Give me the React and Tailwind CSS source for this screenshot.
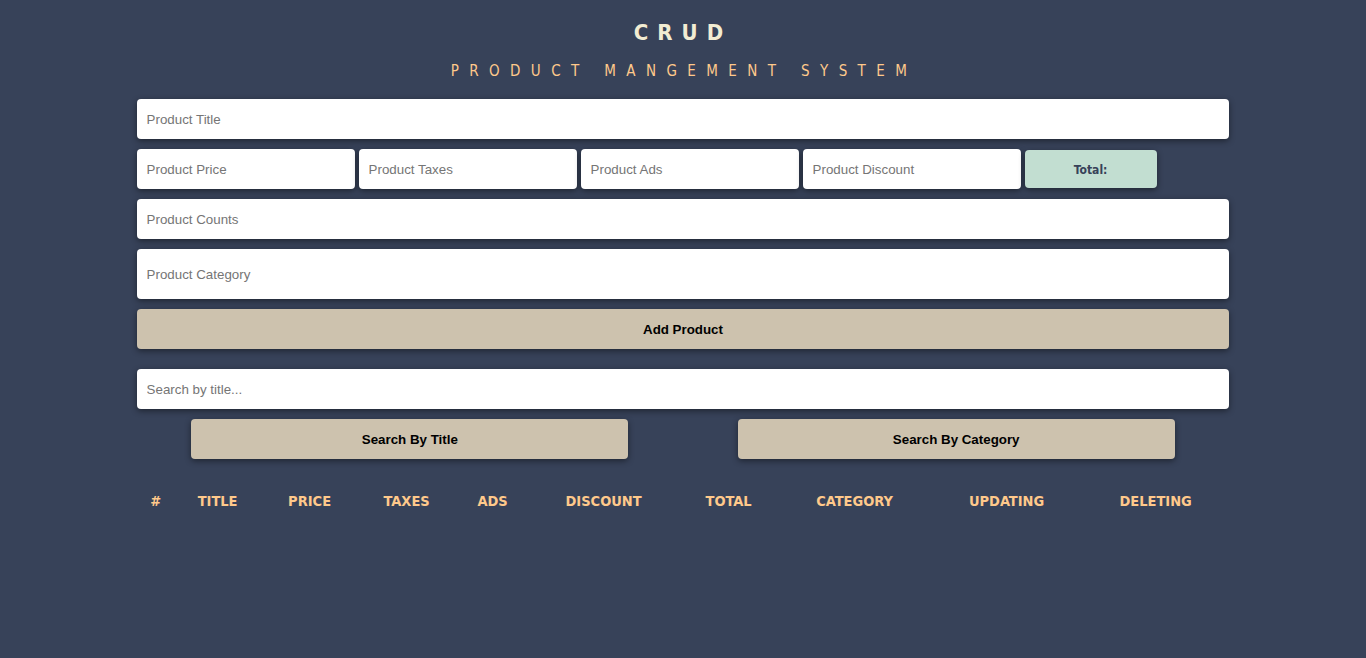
const Field = ({ placeholder, className = "" }) => (
  <input
    type="text"
    placeholder={placeholder}
    className={`w-full h-10 rounded bg-white px-[10px] pt-[1px] text-[13.33px] text-[#333] placeholder:text-[#757575] outline-none shadow-[0_2px_6px_rgba(0,0,0,0.45)] ${className}`}
    style={{ fontFamily: "'Liberation Sans', Arial, sans-serif" }}
  />
);

const Button = ({ children, className = "" }) => (
  <button
    className={`h-10 rounded bg-[#cdc2ae] pt-[1px] text-[13.33px] font-bold text-black shadow-[0_2px_6px_rgba(0,0,0,0.45)] ${className}`}
    style={{ fontFamily: "'Liberation Sans', Arial, sans-serif" }}
  >
    {children}
  </button>
);

const columns = [
  ["#", "w-[38px]"],
  ["TITLE", "w-[86px]"],
  ["PRICE", "w-[98px]"],
  ["TAXES", "w-[96px]"],
  ["ADS", "w-[76px]"],
  ["DISCOUNT", "w-[146px]"],
  ["TOTAL", "w-[104px]"],
  ["CATEGORY", "w-[148px]"],
  ["UPDATING", "w-[156px]"],
  ["DELETING", "w-[142px]"],
];

export default function App() {
  return (
    <div className="min-h-[658px] w-full bg-[#374259] font-['DejaVu_Sans_Condensed',sans-serif]">
      <div className="mx-auto w-[80%] pt-[19px]">
        <div className="text-center">
          <h1 className="h-[28px] text-[22px] leading-[28px] font-bold tracking-[9px] text-[#f2ecd2]">
            CRUD
          </h1>
          <p className="mt-[12px] h-[24px] pl-[2px] text-[15px] leading-[24px] tracking-[10.4px] text-[#ffc98b]">
            PRODUCT MANGEMENT SYSTEM
          </p>
        </div>

        <div className="mt-[16px] flex flex-col gap-[10px]">
          <Field placeholder="Product Title" />
          <div className="flex items-center gap-1">
            <Field placeholder="Product Price" className="!w-[218px]" />
            <Field placeholder="Product Taxes" className="!w-[218px]" />
            <Field placeholder="Product Ads" className="!w-[218px]" />
            <Field placeholder="Product Discount" className="!w-[218px]" />
            <div className="flex h-[38px] w-[132px] items-center justify-center rounded bg-[#c2ded1] pt-[1px] text-[12px] font-bold text-[#374259] shadow-[0_2px_6px_rgba(0,0,0,0.45)]">
              Total:
            </div>
          </div>
          <Field placeholder="Product Counts" />
          <Field placeholder="Product Category" className="!h-[50px]" />
          <Button className="w-full">Add Product</Button>
        </div>

        <div className="mt-5 flex flex-col gap-[10px]">
          <Field placeholder="Search by title..." />
          <div className="flex">
            <div className="flex w-1/2 justify-center">
              <Button className="w-[80%]">Search By Title</Button>
            </div>
            <div className="flex w-1/2 justify-center">
              <Button className="w-[80%]">Search By Category</Button>
            </div>
          </div>
        </div>

        <table className="mt-[30px] table-fixed border-collapse">
          <thead>
            <tr>
              {columns.map(([label, w]) => (
                <th
                  key={label}
                  className={`${w} h-[24px] p-0 text-center text-[14.5px] leading-[24px] font-bold text-[#ffc98b]`}
                >
                  {label}
                </th>
              ))}
            </tr>
          </thead>
          <tbody />
        </table>
      </div>
    </div>
  );
}
